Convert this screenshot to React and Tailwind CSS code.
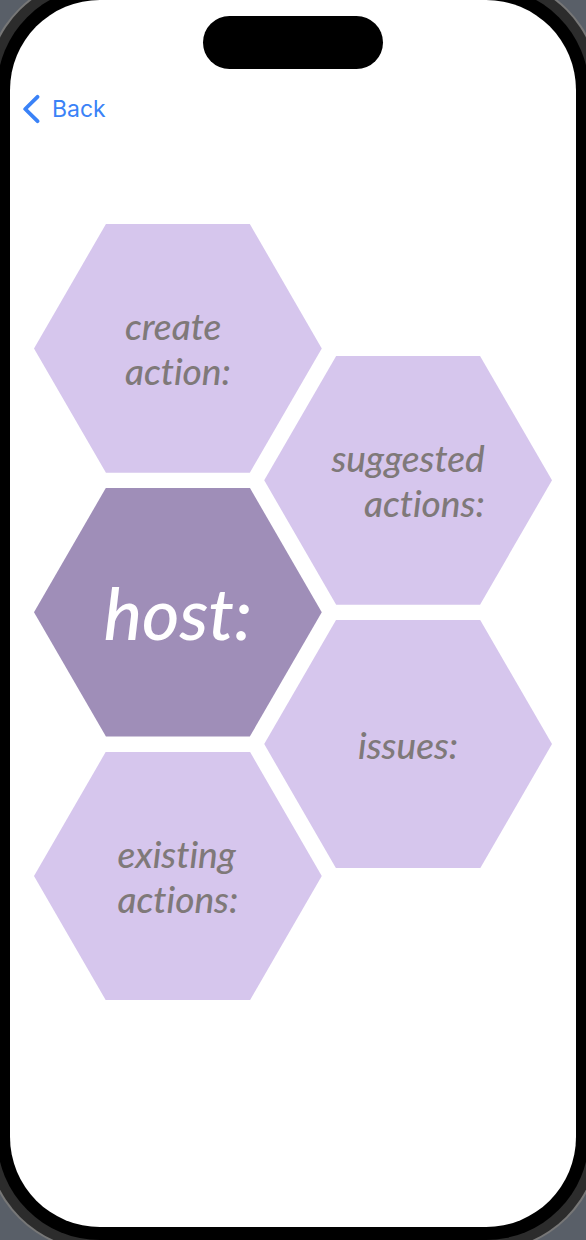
const tiles = {
  left: [
    { id: "create", lines: ["create", "action:"], align: "text-left" },
    { id: "host", lines: ["host:"], align: "text-center", active: true },
    { id: "existing", lines: ["existing", "actions:"], align: "text-left" },
  ],
  right: [
    { id: "suggested", lines: ["suggested", "actions:"], align: "text-right" },
    { id: "issues", lines: ["issues:"], align: "text-center" },
  ],
};

function HexButton({ lines, align, active }) {
  const tone = active
    ? "bg-[#9f8eb8] text-white text-[72px] leading-[84px]"
    : "bg-[#d6c6ed] text-[#7f7979] text-[37px] leading-[45px]";
  return (
    <button
      type="button"
      className={`flex aspect-[288/249] w-full items-center justify-center font-['Lato',sans-serif] font-medium italic [font-variant-ligatures:none] [clip-path:polygon(25%_0,75%_0,100%_50%,75%_100%,25%_100%,0_50%)] ${tone}`}
    >
      <span className={align}>
        {lines.map((line) => (
          <span key={line} className="block">
            {line}
          </span>
        ))}
      </span>
    </button>
  );
}

export default function App() {
  return (
    <div className="flex min-h-screen overflow-hidden bg-[#595f68] px-2.5 pb-[13px]">
      <div className="flex flex-1 flex-col rounded-[90px] bg-white shadow-[0_0_0_13px_#000,0_0_0_23px_#2c2c2c,0_0_0_25px_#777]">
        <div className="mx-auto mt-4 h-[53px] w-[180px] rounded-full bg-black" />
        <header className="mt-6 flex px-3">
          <a
            href="#back"
            className="flex items-center gap-3 font-['Inter',sans-serif] text-[23px] leading-8 text-[#3a82f7]"
          >
            <svg
              viewBox="0 0 18 30"
              className="h-[30px] w-[18px]"
              fill="none"
              stroke="currentColor"
              strokeWidth="3.8"
              strokeLinecap="round"
              strokeLinejoin="round"
              aria-hidden="true"
            >
              <path d="M15.5 2.8 3.2 15 15.5 27.2" />
            </svg>
            Back
          </a>
        </header>
        <main className="mt-[99px] flex justify-center px-6">
          <div className="grid w-full max-w-[518px] grid-cols-9 items-center">
            <div className="col-start-1 col-end-6 row-start-1 flex flex-col gap-[15px]">
              {tiles.left.map((tile) => (
                <HexButton key={tile.id} {...tile} />
              ))}
            </div>
            <div className="pointer-events-none col-start-5 col-end-10 row-start-1 flex flex-col gap-[15px] *:pointer-events-auto">
              {tiles.right.map((tile) => (
                <HexButton key={tile.id} {...tile} />
              ))}
            </div>
          </div>
        </main>
      </div>
    </div>
  );
}
